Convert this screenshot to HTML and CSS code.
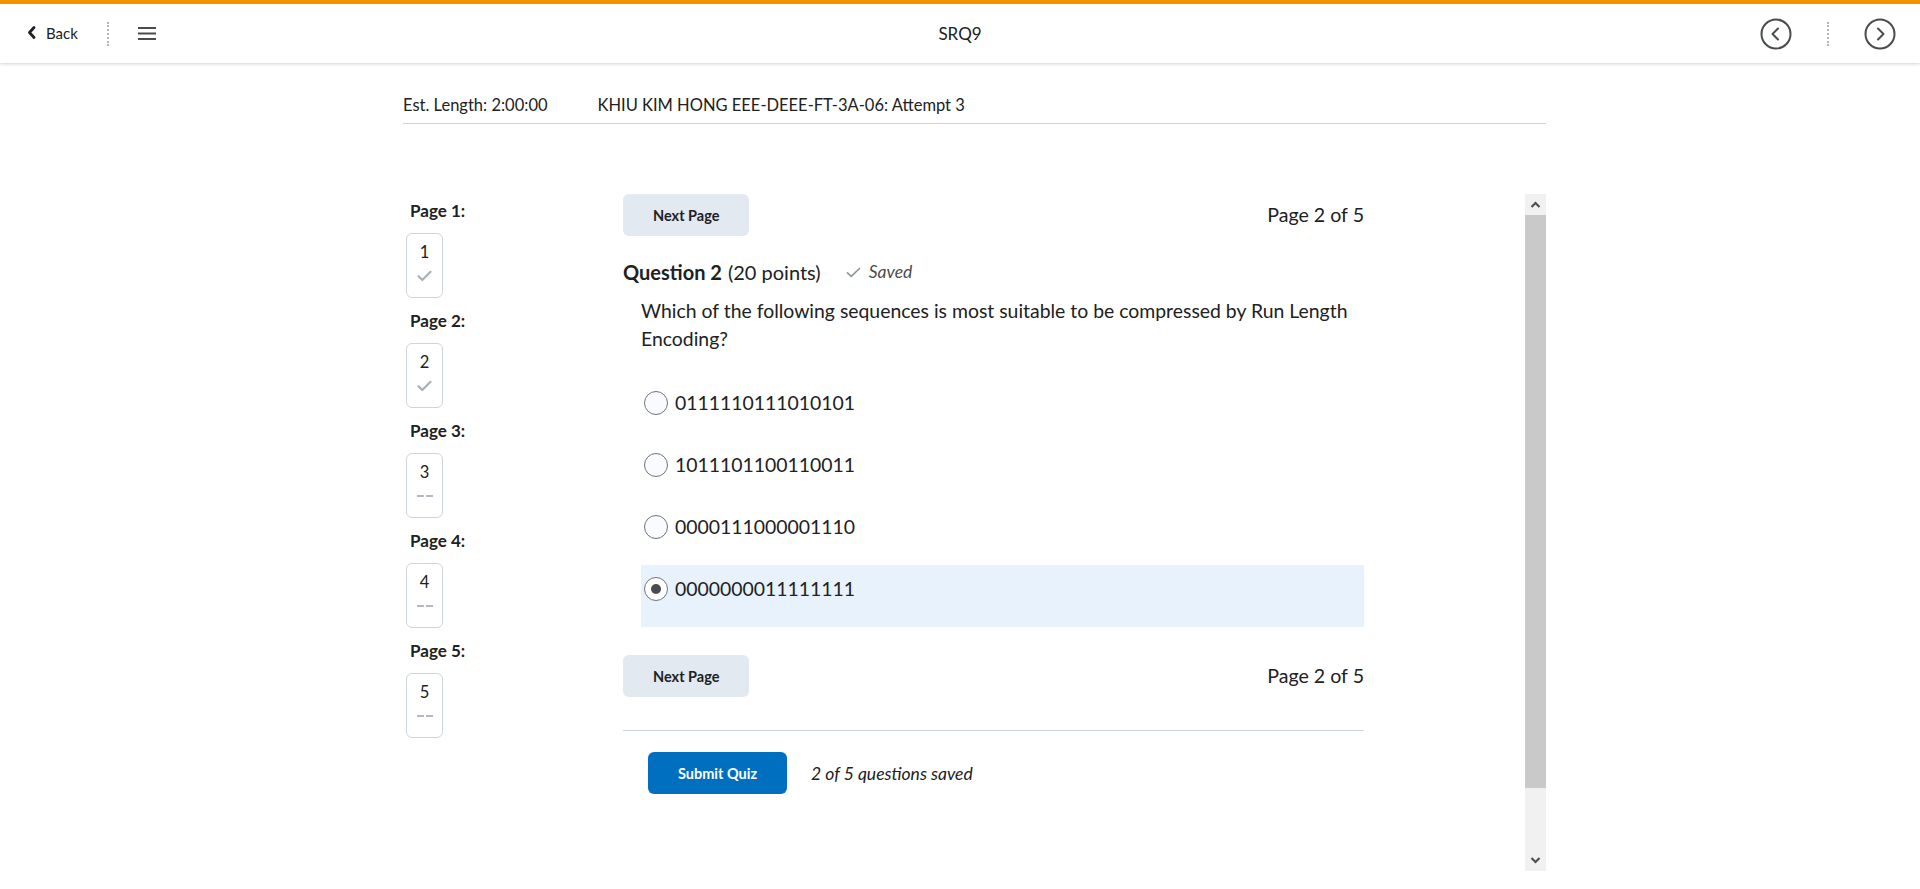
FILE: index.html
```html
<!DOCTYPE html>
<html lang="en">
<head>
<meta charset="utf-8">
<title>SRQ9</title>
<link rel="stylesheet" href="styles.css">
</head>
<body>
<header class="nav">
  <div class="nav-left">
    <a class="back" href="#">
      <svg class="back-icon" width="9" height="13" viewBox="0 0 9 13"><path d="M7 1.5 L2.5 6.5 L7 11.5" fill="none" stroke="#202122" stroke-width="2.8" stroke-linecap="round" stroke-linejoin="round"/></svg>
      <span>Back</span>
    </a>
    <span class="vsep"></span>
    <svg class="menu" width="18" height="13" viewBox="0 0 18 13"><rect x="0" y="0" width="18" height="2" fill="#494c4e"/><rect x="0" y="5.5" width="18" height="2" fill="#494c4e"/><rect x="0" y="11" width="18" height="2" fill="#494c4e"/></svg>
  </div>
  <div class="nav-title">SRQ9</div>
  <div class="nav-right">
    <svg class="circ" width="32" height="32" viewBox="0 0 32 32"><circle cx="16" cy="16" r="14.5" fill="none" stroke="#494c4e" stroke-width="2"/><path d="M18 10.5 L12.5 16 L18 21.5" fill="none" stroke="#494c4e" stroke-width="2" stroke-linecap="round" stroke-linejoin="round"/></svg>
    <span class="vsep"></span>
    <svg class="circ" width="32" height="32" viewBox="0 0 32 32"><circle cx="16" cy="16" r="14.5" fill="none" stroke="#494c4e" stroke-width="2"/><path d="M14 10.5 L19.5 16 L14 21.5" fill="none" stroke="#494c4e" stroke-width="2" stroke-linecap="round" stroke-linejoin="round"/></svg>
  </div>
</header>

<main class="page">
  <div class="info">
    <span>Est. Length: 2:00:00</span>
    <span>KHIU KIM HONG EEE-DEEE-FT-3A-06: Attempt 3</span>
  </div>

  <div class="quiz">
    <nav class="pages">
      <div class="page-item">
        <div class="page-label">Page 1:</div>
        <div class="page-box"><span class="num">1</span><span class="mark"><svg width="15" height="12" viewBox="0 0 15 12"><path d="M1.5 6.2 L5.3 10 L13.5 1.8" fill="none" stroke="#a9b0b5" stroke-width="2.2" stroke-linecap="round" stroke-linejoin="round"/></svg></span></div>
      </div>
      <div class="page-item">
        <div class="page-label">Page 2:</div>
        <div class="page-box"><span class="num">2</span><span class="mark"><svg width="15" height="12" viewBox="0 0 15 12"><path d="M1.5 6.2 L5.3 10 L13.5 1.8" fill="none" stroke="#a9b0b5" stroke-width="2.2" stroke-linecap="round" stroke-linejoin="round"/></svg></span></div>
      </div>
      <div class="page-item">
        <div class="page-label">Page 3:</div>
        <div class="page-box"><span class="num">3</span><span class="mark"><span class="dash"></span><span class="dash"></span></span></div>
      </div>
      <div class="page-item">
        <div class="page-label">Page 4:</div>
        <div class="page-box"><span class="num">4</span><span class="mark"><span class="dash"></span><span class="dash"></span></span></div>
      </div>
      <div class="page-item">
        <div class="page-label">Page 5:</div>
        <div class="page-box"><span class="num">5</span><span class="mark"><span class="dash"></span><span class="dash"></span></span></div>
      </div>
    </nav>

    <section class="content">
      <div class="pager">
        <button class="btn">Next Page</button>
        <span class="page-count">Page 2 of 5</span>
      </div>

      <h2 class="q-head"><strong>Question 2</strong> (20 points)
        <span class="saved"><svg width="15" height="11" viewBox="0 0 15 11"><path d="M1.5 5.8 L5.2 9.3 L13.5 1.5" fill="none" stroke="#90989d" stroke-width="1.7" stroke-linecap="round" stroke-linejoin="round"/></svg><em>Saved</em></span>
      </h2>

      <p class="q-text">Which of the following sequences is most suitable to be compressed by Run Length Encoding?</p>

      <div class="options">
        <label class="opt"><span class="radio"></span><span>0111110111010101</span></label>
        <label class="opt"><span class="radio"></span><span>1011101100110011</span></label>
        <label class="opt"><span class="radio"></span><span>0000111000001110</span></label>
        <label class="opt selected"><span class="radio checked"></span><span>0000000011111111</span></label>
      </div>

      <div class="pager pager-bottom">
        <button class="btn">Next Page</button>
        <span class="page-count">Page 2 of 5</span>
      </div>

      <div class="submit-row">
        <button class="btn btn-primary">Submit Quiz</button>
        <em class="saved-count">2 of 5 questions saved</em>
      </div>
    </section>

    <div class="scrollbar">
      <div class="sb-btn"><svg width="11" height="7" viewBox="0 0 11 7"><path d="M1.5 6 L5.5 2 L9.5 6" fill="none" stroke="#505050" stroke-width="2.2"/></svg></div>
      <div class="sb-thumb"></div>
      <div class="sb-track"></div>
      <div class="sb-btn"><svg width="11" height="7" viewBox="0 0 11 7"><path d="M1.5 1 L5.5 5 L9.5 1" fill="none" stroke="#505050" stroke-width="2.2"/></svg></div>
    </div>
  </div>
</main>
</body>
</html>
```

FILE: styles.css
```css
* { box-sizing: border-box; }

html, body {
  margin: 0;
  padding: 0;
  background: #ffffff;
  font-family: Lato, "Noto Sans", sans-serif;
  color: #202122;
}

/* ---------- top navigation ---------- */
.nav {
  height: 63px;
  border-top: 4px solid #f39200;
  background: #ffffff;
  box-shadow: 0 1px 3px rgba(0, 0, 0, 0.18);
  display: grid;
  grid-template-columns: 1fr auto 1fr;
  align-items: center;
  position: relative;
  z-index: 1;
}

.nav-left {
  display: flex;
  align-items: center;
  padding-left: 27px;
}

.back {
  display: flex;
  align-items: center;
  gap: 10px;
  text-decoration: none;
  color: #202122;
  font-size: 15px;
  margin-top: -2px;
}

.vsep {
  display: block;
  width: 0;
  height: 24px;
  border-left: 2px dotted #b1b6ba;
}

.nav-left .vsep { margin: 0 29px 0 29px; }

.nav-title {
  font-size: 17px;
  color: #202122;
}

.nav-right {
  display: flex;
  align-items: center;
  justify-content: flex-end;
  padding-right: 24px;
}

.nav-right .vsep { margin: 0 35px; }

.circ { display: block; }

/* ---------- page ---------- */
.page {
  width: 1143px;
  margin-left: 403px;
}

.info {
  margin-top: 30px;
  display: flex;
  gap: 50px;
  font-size: 16.5px;
  line-height: 24px;
  padding-bottom: 6px;
  border-bottom: 1px solid #cdd5dc;
}

.quiz {
  margin-top: 70px;
  height: 677px;
  display: flex;
}

/* ---------- page list ---------- */
.pages {
  width: 220px;
  flex-shrink: 0;
  padding-top: 7px;
  padding-left: 3px;
}

.page-item { height: 110px; }

.page-label {
  font-size: 17px;
  font-weight: 700;
  line-height: 20px;
  padding-left: 4px;
}

.page-box {
  margin-top: 12px;
  width: 37px;
  height: 65px;
  border: 1px solid #cdd5dc;
  border-radius: 6px;
  display: flex;
  flex-direction: column;
  align-items: center;
  padding-top: 7px;
}

.num {
  font-size: 16.5px;
  line-height: 22px;
}

.mark {
  height: 26px;
  display: flex;
  align-items: center;
  justify-content: center;
  gap: 2px;
}

.dash {
  display: block;
  width: 7px;
  height: 2px;
  background: #b3b9be;
}

/* ---------- main content ---------- */
.content {
  width: 741px;
  flex-shrink: 0;
}

.pager {
  display: flex;
  justify-content: space-between;
  align-items: center;
}

.btn {
  height: 42px;
  padding: 0 30px;
  border: none;
  border-radius: 6px;
  background: #e3e9f1;
  color: #202122;
  font-family: Lato, sans-serif;
  font-size: 14.5px;
  font-weight: 700;
}

.btn-primary {
  background: #006fbf;
  color: #ffffff;
  width: 139px;
  padding: 0;
}

.page-count {
  font-size: 19.6px;
  line-height: 28px;
}

.q-head {
  margin: 21px 0 0 0;
  font-size: 20px;
  line-height: 30px;
  font-weight: 400;
  display: flex;
  align-items: center;
  gap: 6px;
}

.q-head strong { font-weight: 700; }

.saved {
  display: flex;
  align-items: center;
  gap: 8px;
  margin-left: 19px;
  font-size: 17.5px;
  color: #494c4e;
}

.q-text {
  margin: 10px 0 0 0;
  padding-left: 18px;
  font-size: 19.4px;
  line-height: 28px;
}

.options {
  margin-top: 26px;
  margin-left: 18px;
}

.opt {
  display: flex;
  align-items: flex-start;
  gap: 7px;
  height: 62px;
  padding: 12px 0 0 3px;
  font-size: 19.4px;
  line-height: 24px;
}

.opt.selected { background: #e8f2fc; }

.radio {
  width: 24px;
  height: 24px;
  border-radius: 50%;
  border: 1px solid #6e7477;
  background: #f9fbff;
  flex-shrink: 0;
  display: flex;
  align-items: center;
  justify-content: center;
}

.radio.checked { background: #ffffff; }

.radio.checked::after {
  content: "";
  width: 10px;
  height: 10px;
  border-radius: 50%;
  background: #494c4e;
}

.pager-bottom {
  margin-top: 28px;
  padding-bottom: 33px;
  border-bottom: 1px solid #cdd5dc;
}

.submit-row {
  margin-top: 21px;
  padding-left: 25px;
  display: flex;
  align-items: center;
  gap: 24px;
}

.saved-count {
  font-size: 17.5px;
  color: #202122;
}

/* ---------- scrollbar ---------- */
.scrollbar {
  margin-left: auto;
  width: 21px;
  display: flex;
  flex-direction: column;
  background: #f1f1f1;
}

.sb-btn {
  height: 21px;
  display: flex;
  align-items: center;
  justify-content: center;
}

.sb-thumb {
  height: 573px;
  background: #c9c9c9;
}

.sb-track { flex: 1; }
```
